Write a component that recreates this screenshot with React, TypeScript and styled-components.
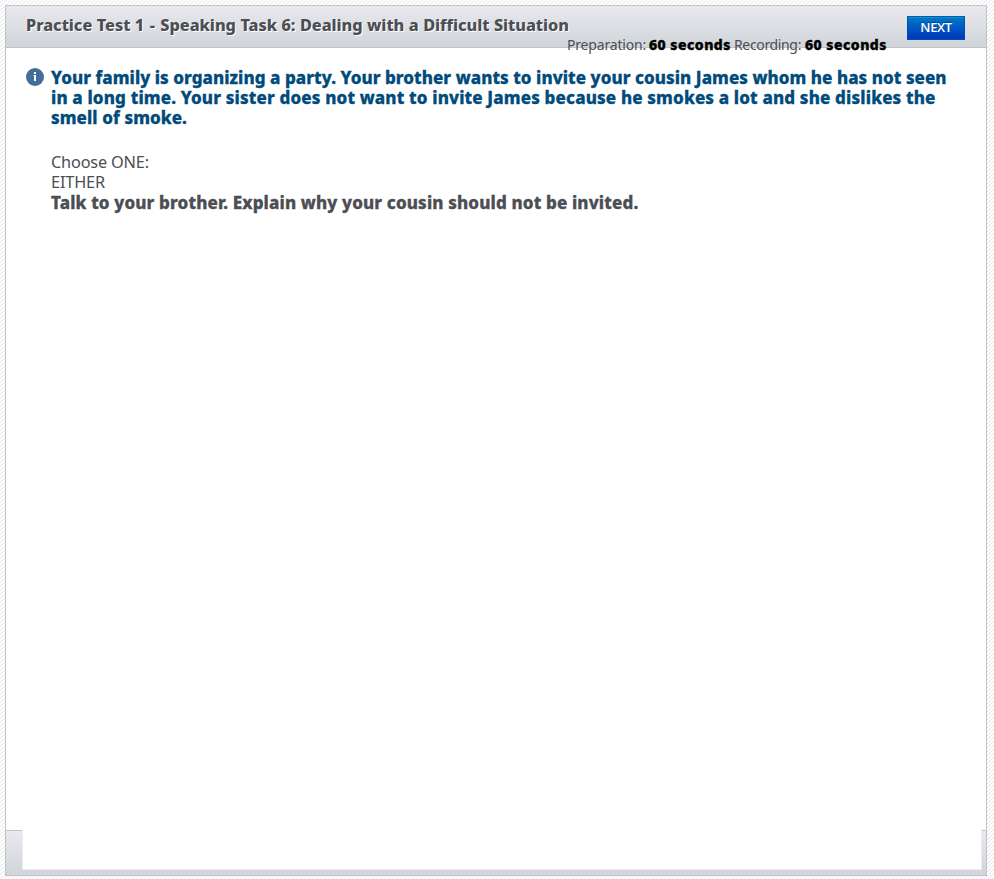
import React from 'react';
import styled, { createGlobalStyle } from 'styled-components';

const GlobalStyle = createGlobalStyle`
  * { box-sizing: border-box; }
  body {
    margin: 0;
    color: #4b4e53;
    font-family: "Noto Sans", "Open Sans", sans-serif;
    background-color: #fff;
    background-size: 4px 4px;
    background-image:
      conic-gradient(from 90deg at 3px 3px, #e6e6e6 25%, transparent 0),
      conic-gradient(from 90deg at 3px 3px, #e6e6e6 25%, transparent 0),
      conic-gradient(from 90deg at 3px 3px, #e6e6e6 25%, transparent 0),
      conic-gradient(from 90deg at 3px 3px, #e6e6e6 25%, transparent 0);
    background-position: 0 0, 1px 3px, 2px 2px, 3px 1px;
  }
`;

const Page = styled.div`
  display: flex;
  height: 879px;
  padding: 5px 7px 3px 5px;
`;

const Panel = styled.main`
  display: flex;
  flex: 1;
  flex-direction: column;
  border: 1px solid #c2c3c8;
  background: #fff;
`;

const Header = styled.header`
  display: flex;
  flex: none;
  align-items: flex-start;
  height: 42px;
  padding: 0 21px 0 20px;
  border-bottom: 1px solid #c2c3c8;
  background: linear-gradient(#e9e9ef, #d0d5d9);
  white-space: nowrap;
`;

const Title = styled.h1`
  flex: none;
  width: 541px;
  margin: 8px 0 0;
  font-size: 16.3px;
  font-weight: 800;
  line-height: 22px;
  letter-spacing: -0.045px;
  word-spacing: 0.3px;
  text-shadow: 1px 1px 0 #fff;
`;

const Dash = styled.span`
  padding: 0 1px;
`;

const Timings = styled.div`
  display: flex;
  flex: 1;
  margin-top: 29px;
  font-size: 14px;
  line-height: 20px;
`;

const TimingLabel = styled.span<{ $width: number; $spacing: number }>`
  width: ${({ $width }) => $width}px;
  letter-spacing: ${({ $spacing }) => $spacing}px;
`;

const Duration = styled.strong<{ $width: number }>`
  width: ${({ $width }) => $width}px;
  color: #000;
  font-weight: 800;
  letter-spacing: 0.5px;
  -webkit-text-stroke: 0.4px #000;
`;

const NextButton = styled.button`
  width: 58px;
  height: 24px;
  margin-top: 10px;
  padding: 0 0 1px;
  border: 1px solid #0050a8;
  border-top-color: #005ea5;
  background: linear-gradient(#0079c8, #0036bd);
  box-shadow: inset 0 1px 0 #168bcd;
  color: #fff;
  font: 600 13px/21px "Open Sans", sans-serif;
  letter-spacing: -0.4px;
  text-shadow: 0 -1px 0 #00408c;
`;

const Body = styled.section`
  display: flex;
  flex: 1;
  align-items: flex-start;
  gap: 7px;
  padding: 19px 20px;
`;

const InfoMark = styled.svg`
  flex: none;
  width: 18px;
  height: 18px;
  margin-top: 1px;
`;

const Content = styled.div`
  display: flex;
  flex-direction: column;
  gap: 25px;
`;

const Paragraph = styled.div<{ $color?: string }>`
  color: ${({ $color }) => $color ?? 'inherit'};
  line-height: 20px;
  white-space: nowrap;
`;

const Line = styled.div<{ $strong?: boolean; $spacing: number }>`
  height: 20px;
  font-size: ${({ $strong }) => ($strong ? 17 : 16.3)}px;
  font-weight: ${({ $strong }) => ($strong ? 800 : 400)};
  line-height: ${({ $strong }) => ($strong ? 22 : 20)}px;
  letter-spacing: ${({ $spacing }) => $spacing}px;
  -webkit-text-stroke: ${({ $strong }) => ($strong ? '0.3px currentColor' : '0')};
`;

const Footer = styled.footer`
  display: flex;
  flex: none;
  height: 45px;
  padding: 0 4px 5px 16px;
  border-top: 1px solid #c2c3c8;
  background: linear-gradient(#e9e9ef, #d0d5d9);
`;

const FooterBox = styled.div`
  flex: 1;
  margin-top: -1px;
  border: 1px solid #ebedf0;
  border-top: 0;
  background: #fff;
`;

export default function App() {
  return (
    <>
      <GlobalStyle />
      <Page>
        <Panel>
          <Header>
            <Title>Practice Test 1 <Dash>-</Dash> Speaking Task 6: Dealing with a Difficult Situation</Title>
            <Timings>
              <TimingLabel $width={82} $spacing={-0.18}>Preparation:</TimingLabel>
              <Duration $width={85}>60 seconds</Duration>
              <TimingLabel $width={71} $spacing={-0.35}>Recording:</TimingLabel>
              <Duration $width={82}>60 seconds</Duration>
            </Timings>
            <NextButton>NEXT</NextButton>
          </Header>
          <Body>
            <InfoMark viewBox="0 0 18 18" aria-label="Information">
              <circle cx="9" cy="9" r="9" fill="#456d9b" />
              <path d="M8 4h2v2H8zM7.5 7H10v6H8V8h-.5z" fill="#fff" />
            </InfoMark>
            <Content>
              <Paragraph $color="#004b7b">
                <Line $strong $spacing={0.055}>Your family is organizing a party. Your brother wants to invite your cousin James whom he has not seen</Line>
                <Line $strong $spacing={0.153}>in a long time. Your sister does not want to invite James because he smokes a lot and she dislikes the</Line>
                <Line $strong $spacing={0.09}>smell of smoke.</Line>
              </Paragraph>
              <Paragraph>
                <Line $spacing={-0.17}>Choose ONE:</Line>
                <Line $spacing={-0.15}>EITHER</Line>
                <Line $strong $spacing={0.138}>Talk to your brother. Explain why your cousin should not be invited.</Line>
              </Paragraph>
            </Content>
          </Body>
          <Footer>
            <FooterBox />
          </Footer>
        </Panel>
      </Page>
    </>
  );
}
